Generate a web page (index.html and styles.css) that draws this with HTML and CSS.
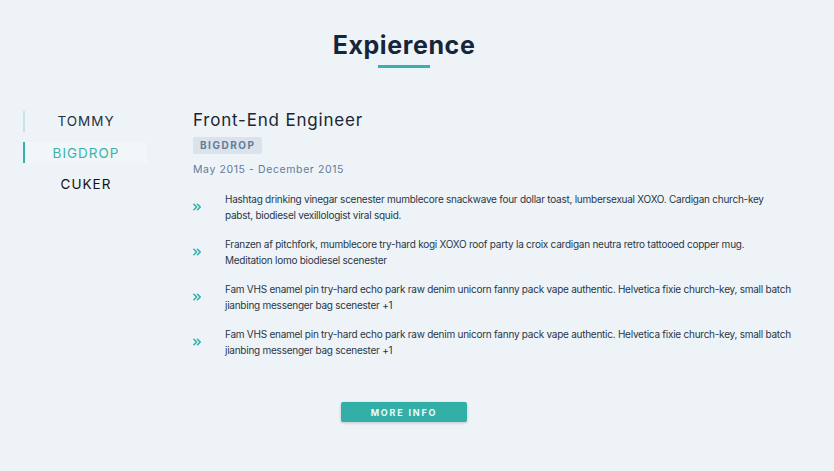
FILE: index.html
```html
<!DOCTYPE html>
<html lang="en">
<head>
<meta charset="utf-8">
<title>Experience</title>
<link rel="stylesheet" href="styles.css">
</head>
<body>
<section class="section">
  <div class="title">
    <h2>Expierence</h2>
    <div class="underline"></div>
  </div>
  <div class="jobs-center">
    <div class="btn-container">
      <button class="job-btn faded">TOMMY</button>
      <button class="job-btn active-btn">BIGDROP</button>
      <button class="job-btn hovered">CUKER</button>
    </div>
    <article class="job-info">
      <h3>Front-End Engineer</h3>
      <h4>BIGDROP</h4>
      <p class="job-date">May 2015 - December 2015</p>
      <div class="job-desc">
        <svg class="job-icon" viewBox="0 0 10 8"><path d="M1 1l3 3-3 3M5 1l3 3-3 3" fill="none" stroke="#31b1aa" stroke-width="1.8" stroke-linecap="round" stroke-linejoin="round"/></svg>
        <p>Hashtag drinking vinegar scenester mumblecore snackwave four dollar toast, lumbersexual XOXO. Cardigan church-key pabst, biodiesel vexillologist viral squid.</p>
      </div>
      <div class="job-desc">
        <svg class="job-icon" viewBox="0 0 10 8"><path d="M1 1l3 3-3 3M5 1l3 3-3 3" fill="none" stroke="#31b1aa" stroke-width="1.8" stroke-linecap="round" stroke-linejoin="round"/></svg>
        <p>Franzen af pitchfork, mumblecore try-hard kogi XOXO roof party la croix cardigan neutra retro tattooed copper mug. Meditation lomo biodiesel scenester</p>
      </div>
      <div class="job-desc">
        <svg class="job-icon" viewBox="0 0 10 8"><path d="M1 1l3 3-3 3M5 1l3 3-3 3" fill="none" stroke="#31b1aa" stroke-width="1.8" stroke-linecap="round" stroke-linejoin="round"/></svg>
        <p>Fam VHS enamel pin try-hard echo park raw denim unicorn fanny pack vape authentic. Helvetica fixie church-key, small batch jianbing messenger bag scenester +1</p>
      </div>
      <div class="job-desc">
        <svg class="job-icon" viewBox="0 0 10 8"><path d="M1 1l3 3-3 3M5 1l3 3-3 3" fill="none" stroke="#31b1aa" stroke-width="1.8" stroke-linecap="round" stroke-linejoin="round"/></svg>
        <p>Fam VHS enamel pin try-hard echo park raw denim unicorn fanny pack vape authentic. Helvetica fixie church-key, small batch jianbing messenger bag scenester +1</p>
      </div>
    </article>
  </div>
  <div class="btn-row">
    <button class="btn">MORE INFO</button>
  </div>
</section>
</body>
</html>
```
FILE: styles.css
```css
* { box-sizing: border-box; }
html, body { margin: 0; padding: 0; }
body {
  background: #eef3f8;
  font-family: Inter, "Open Sans", sans-serif;
  color: #102a42;
  height: 471px;
  overflow: hidden;
}
.section {
  width: 808px;
  padding-top: 28px;
}
.title { text-align: center; }
.title h2 {
  margin: 0;
  font-size: 25px;
  line-height: 34px;
  font-weight: 700;
  letter-spacing: 0.6px;
  color: #15253a;
}
.underline {
  width: 52px;
  height: 3px;
  margin: 3px auto 0;
  background: #34b2ab;
}
.jobs-center {
  display: flex;
  margin-top: 40px;
  gap: 46px;
}
.btn-container {
  margin-left: 23px;
  width: 124px;
  padding-top: 2.5px;
  display: flex;
  flex-direction: column;
  gap: 10.5px;
}
.job-btn {
  background: transparent;
  border: none;
  border-left: 2px solid transparent;
  height: 21px;
  padding: 0;
  font-family: Inter, sans-serif;
  font-size: 13.5px;
  letter-spacing: 1px;
  color: #102a42;
  text-align: center;
}
.job-btn.faded { border-left-color: #c3e5e3; color: #1f3342; }
.job-btn.active-btn { border-left-color: #34b2ab; color: #3bb3aa; background: #f1f6f9; }
.job-btn.hovered { color: #111; }
.job-info { width: 600px; }
.job-info h3 {
  margin: 0;
  font-size: 17px;
  line-height: 24px;
  font-weight: 400;
  letter-spacing: 0.8px;
  color: #1b2633;
}
.job-info h4 {
  display: inline-block;
  margin: 5px 0 0;
  padding: 0 7px;
  font-size: 10px;
  line-height: 17px;
  font-weight: 700;
  letter-spacing: 1.5px;
  color: #617d98;
  background: #dae2ec;
  border-radius: 2px;
}
.job-date {
  margin: 8px 0 0;
  font-size: 10.5px;
  line-height: 16px;
  letter-spacing: 0.6px;
  color: #617d98;
}
.job-desc {
  display: flex;
  align-items: center;
  gap: 23px;
  margin-top: 13px;
}
.job-icon { width: 9px; height: 8px; flex: none; }
.job-desc p {
  margin: 0;
  width: 566px;
  font-size: 10px;
  line-height: 16px;
  letter-spacing: -0.25px;
  color: #2a3644;
}
.btn-row {
  display: flex;
  justify-content: center;
  margin-top: 44px;
}
.btn {
  width: 126px;
  height: 20px;
  border: none;
  border-radius: 2px;
  background: #32b0a8;
  color: #e8fbfc;
  font-family: Inter, sans-serif;
  font-size: 9px;
  font-weight: 700;
  letter-spacing: 1.8px;
  box-shadow: 0 1px 3px rgba(0,0,0,0.2);
}
```
